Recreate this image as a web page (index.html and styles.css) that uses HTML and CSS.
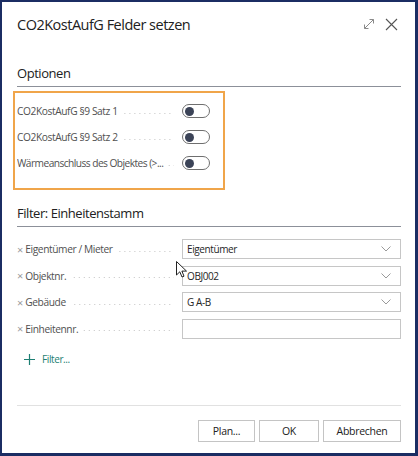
FILE: index.html
```html
<!DOCTYPE html>
<html lang="de">
<head>
<meta charset="utf-8">
<title>CO2KostAufG Felder setzen</title>
<link rel="stylesheet" href="styles.css">
</head>
<body>
<div class="dialog">
  <header class="dlg-head">
    <h1 class="dlg-title">CO2KostAufG Felder setzen</h1>
    <div class="head-icons">
      <svg class="ico-expand" width="12" height="12" viewBox="0 0 12 12"><path d="M1.5 10.5 L10.5 1.5 M6.5 1.5 H10.5 V5.5 M1.5 6.5 V10.5 H5.5" fill="none" stroke="#8a8a8a" stroke-width="1"/></svg>
      <svg class="ico-close" width="13" height="13" viewBox="0 0 13 13"><path d="M1 1 L12 12 M12 1 L1 12" fill="none" stroke="#555" stroke-width="1.1"/></svg>
    </div>
  </header>

  <section class="group">
    <h2 class="group-title">Optionen</h2>
    <div class="options-box">
      <div class="row">
        <div class="lbl"><span class="lbl-text">CO2KostAufG §9 Satz 1</span><span class="dots"></span></div>
        <span class="toggle"><span class="knob"></span></span>
      </div>
      <div class="row">
        <div class="lbl"><span class="lbl-text">CO2KostAufG §9 Satz 2</span><span class="dots"></span></div>
        <span class="toggle"><span class="knob"></span></span>
      </div>
      <div class="row">
        <div class="lbl" title="Wärmeanschluss des Objektes (&gt;1 Gebäude)"><span class="lbl-text long">Wärmeanschluss des Objektes (&gt;...</span><span class="dots"></span></div>
        <span class="toggle"><span class="knob"></span></span>
      </div>
    </div>
  </section>

  <section class="group filter">
    <h2 class="group-title">Filter: Einheitenstamm</h2>
    <div class="frows">
      <div class="row frow">
        <div class="lbl"><span class="x">×</span><span class="lbl-text">Eigentümer / Mieter</span><span class="dots"></span></div>
        <div class="input"><span class="val">Eigentümer</span><svg class="chev" width="10" height="6" viewBox="0 0 10 6"><path d="M0.5 0.5 L5 5 L9.5 0.5" fill="none" stroke="#9a9a9a" stroke-width="1"/></svg></div>
      </div>
      <div class="row frow">
        <div class="lbl"><span class="x">×</span><span class="lbl-text">Objektnr.</span><span class="dots"></span></div>
        <div class="input"><span class="val">OBJ002</span><svg class="chev" width="10" height="6" viewBox="0 0 10 6"><path d="M0.5 0.5 L5 5 L9.5 0.5" fill="none" stroke="#9a9a9a" stroke-width="1"/></svg></div>
      </div>
      <div class="row frow">
        <div class="lbl"><span class="x">×</span><span class="lbl-text">Gebäude</span><span class="dots"></span></div>
        <div class="input"><span class="val">G A-B</span><svg class="chev" width="10" height="6" viewBox="0 0 10 6"><path d="M0.5 0.5 L5 5 L9.5 0.5" fill="none" stroke="#9a9a9a" stroke-width="1"/></svg></div>
      </div>
      <div class="row frow">
        <div class="lbl"><span class="x">×</span><span class="lbl-text">Einheitennr.</span><span class="dots"></span></div>
        <div class="input"></div>
      </div>
    </div>
    <div class="add-filter">
      <svg width="11" height="11" viewBox="0 0 11 11"><path d="M5.5 0 V11 M0 5.5 H11" stroke="#1d7f73" stroke-width="1.2"/></svg>
      <span>Filter...</span>
    </div>
  </section>

  <footer class="dlg-foot">
    <button class="btn btn-plan">Plan...</button>
    <button class="btn btn-ok">OK</button>
    <button class="btn btn-cancel">Abbrechen</button>
  </footer>

  <svg class="cursor" width="12" height="18" viewBox="0 0 12 18"><path d="M0.5 0.5 V14 L3.8 10.8 L6 16 L8 15.2 L5.9 10.1 L10.5 10.1 Z" fill="#fff" stroke="#222" stroke-width="1"/></svg>
</div>
</body>
</html>
```

FILE: styles.css
```css
* { box-sizing: border-box; }
html, body { margin: 0; padding: 0; background: #fff; }
body { font-family: "Open Sans", "Noto Sans", sans-serif; color: #212121; }

.dialog {
  position: relative;
  width: 418px;
  height: 456px;
  border: solid #1b2d63;
  border-width: 2px 3px 3px 2px;
  padding: 0 14px 0 15px;
  display: flex;
  flex-direction: column;
}

.dlg-head {
  display: flex;
  align-items: center;
  justify-content: space-between;
  height: 44px;
}
.dlg-title {
  margin: 0;
  font-size: 14.5px;
  font-weight: 400;
  letter-spacing: -0.5px;
  color: #212121;
}
.head-icons { display: flex; align-items: center; gap: 10px; margin-right: 3px; }

.group { margin-top: 19px; }
.group-title {
  margin: 0;
  font-size: 13px;
  font-weight: 400;
  letter-spacing: -0.45px;
  color: #212121;
  line-height: 17px;
  padding-bottom: 4px;
  border-bottom: 1px solid #8c9099;
}

.options-box {
  margin: 4px 0 0 -4px;
  width: 212px;
  height: 99px;
  border: 2px solid #f0a54a;
  padding: 5px 0 0 2px;
}

.row { display: flex; align-items: center; height: 26px; }
.lbl {
  width: 165px;
  padding-right: 8px;
  display: flex;
  align-items: center;
  font-size: 10.2px;
  letter-spacing: -0.4px;
  color: #505050;
  white-space: nowrap;
  overflow: hidden;
}
.lbl-text { flex: none; }
.lbl-text.long { letter-spacing: -0.55px; }
.dots {
  flex: 1;
  height: 1px;
  margin: 4px 0 0 5px;
  background-image: linear-gradient(to right, #c4c4c4 1px, transparent 1px);
  background-size: 5px 1px;
  background-repeat: repeat-x;
  background-position: right top;
}

.toggle {
  width: 28px;
  height: 14px;
  border: 1px solid #6f6f6f;
  border-radius: 7px;
  display: flex;
  align-items: center;
  padding-left: 2px;
}
.knob { width: 9px; height: 9px; border-radius: 50%; background: #3b4357; }

.filter { margin-top: 15px; }
.frows { margin-top: 9px; }
.frow { height: 26.5px; }
.x { color: #9a9a9a; font-size: 11px; margin-right: 2px; letter-spacing: 0; }
.input {
  width: 219px;
  height: 20px;
  border: 1px solid #c6c6c6;
  display: flex;
  align-items: center;
  justify-content: space-between;
  padding: 0 9px 0 4px;
  font-size: 10px;
  letter-spacing: -0.4px;
  color: #262626;
}

.add-filter {
  display: flex;
  align-items: center;
  gap: 7px;
  margin: 10px 0 0 7px;
  font-size: 10px;
  letter-spacing: -0.4px;
  color: #1d7f73;
}

.dlg-foot {
  margin-top: auto;
  margin-bottom: 11px;
  border-top: 1px solid #e1e1e1;
  padding-top: 14px;
  display: flex;
  justify-content: flex-end;
  gap: 4px;
}
.btn {
  height: 22px;
  background: #fff;
  border: 1px solid #c4c4c4;
  border-radius: 0;
  font-family: inherit;
  font-size: 10.5px;
  letter-spacing: -0.3px;
  color: #212121;
  padding: 0;
}
.btn-plan { width: 57px; }
.btn-ok { width: 60px; }
.btn-cancel { width: 78px; }

.cursor { position: absolute; left: 174px; top: 259px; }
```
